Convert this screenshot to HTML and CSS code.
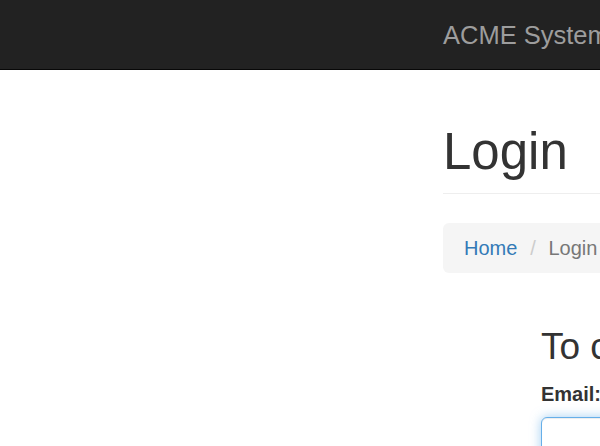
FILE: index.html
```html
<!DOCTYPE html>
<html>
<head>
<meta charset="utf-8">
<title>Login</title>
<link rel="stylesheet" href="styles.css">
</head>
<body>
<nav class="navbar">
  <a class="brand" href="#">ACME System</a>
</nav>
<main class="container">
  <div class="page-header">
    <h1>Login</h1>
  </div>
  <ol class="breadcrumb">
    <li><a href="#">Home</a></li>
    <li class="active"><span class="sep">/&nbsp;</span>Login</li>
  </ol>
  <section class="form-col">
    <h2>To continue, please log in</h2>
    <form>
      <label class="label" for="email">Email:</label>
      <input class="input" id="email" type="email">
    </form>
  </section>
</main>
</body>
</html>
```
FILE: styles.css
```css
html, body {
  margin: 0;
  padding: 0;
  overflow: hidden;
  width: 600px;
  height: 446px;
  background: #fff;
}
body {
  font-family: "Liberation Sans", Arial, sans-serif;
  font-size: 20px;
  line-height: 1.42857;
  color: #333;
}
.navbar {
  box-sizing: border-box;
  width: 600px;
  height: 70px;
  background: #222;
  border-bottom: 1px solid #080808;
  display: flex;
  align-items: center;
  padding-left: 443px;
  white-space: nowrap;
  overflow: hidden;
}
.brand {
  color: #9d9d9d;
  text-decoration: none;
  font-size: 25.5px;
  line-height: 30px;
  margin-top: 1px;
}
.container {
  box-sizing: border-box;
  width: 600px;
  height: 376px;
  overflow: hidden;
  padding-left: 443px;
  padding-top: 54px;
}
.page-header {
  width: 700px;
  border-bottom: 1px solid #eee;
  padding-bottom: 13px;
}
h1 {
  margin: 0;
  font-size: 51px;
  font-weight: 500;
  line-height: 1.1;
}
.breadcrumb {
  width: 700px;
  list-style: none;
  margin: 29px 0 0;
  padding: 10px 21px;
  background: #f5f5f5;
  border-radius: 6px;
  display: flex;
  font-size: 20px;
  line-height: 30px;
  white-space: nowrap;
}
.breadcrumb a {
  color: #337ab7;
  text-decoration: none;
}
.breadcrumb .active {
  color: #777;
}
.sep {
  color: #ccc;
  padding: 0 7px 0 13px;
}
.form-col {
  margin-left: 98px;
  white-space: nowrap;
}
h2 {
  margin: 54px 0 0;
  font-size: 37px;
  font-weight: 500;
  line-height: 1.1;
}
form {
  display: flex;
  flex-direction: column;
  align-items: flex-start;
  margin-top: 12px;
}
.label {
  font-weight: bold;
  font-size: 20px;
  line-height: 28px;
}
.input {
  margin-top: 9px;
  width: 400px;
  height: 48px;
  box-sizing: border-box;
  border: 1.5px solid #66afe9;
  border-radius: 6px;
  outline: 0;
  box-shadow: inset 0 1px 1px rgba(0,0,0,.075), 0 0 11px rgba(102,175,233,.6);
}
```
